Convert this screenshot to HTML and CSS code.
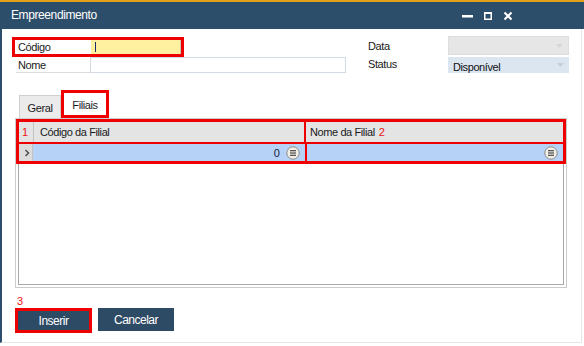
FILE: index.html
```html
<!DOCTYPE html>
<html lang="pt">
<head>
<meta charset="utf-8">
<title>Empreendimento</title>
<link rel="stylesheet" href="styles.css">
</head>
<body>
<div class="window">
  <div class="titlebar">
    <span class="title">Empreendimento</span>
    <svg class="controls" width="52" height="12" viewBox="0 0 52 12">
      <rect x="1" y="5" width="11" height="2.5" fill="#ffffff"/>
      <rect x="23.75" y="2.75" width="6.5" height="6.5" fill="none" stroke="#ffffff" stroke-width="1.5"/>
      <rect x="23" y="2" width="8" height="2" fill="#ffffff"/>
      <path d="M43.5 2.5 L50.5 9.5 M50.5 2.5 L43.5 9.5" stroke="#ffffff" stroke-width="2.2" fill="none"/>
    </svg>
  </div>
  <div class="content">
    <div class="top">
      <div class="left">
        <div class="row codigo">
          <span class="lbl">Código</span>
          <span class="field yellow"><span class="caret"></span></span>
        </div>
        <div class="row nome">
          <span class="lbl">Nome</span>
          <span class="field input"></span>
        </div>
      </div>
      <div class="right">
        <div class="row data">
          <span class="lbl">Data</span>
          <span class="field gray">
            <svg class="arrow" width="7" height="4" viewBox="0 0 7 4"><path d="M0 0 L7 0 L3.5 4 Z" fill="#d6d6d6"/></svg>
          </span>
        </div>
        <div class="row status">
          <span class="lbl">Status</span>
          <span class="field blue">
            <span class="val">Disponível</span>
            <svg class="arrow" width="7" height="4" viewBox="0 0 7 4"><path d="M0 0 L7 0 L3.5 4 Z" fill="#c2cfdc"/></svg>
          </span>
        </div>
      </div>
    </div>

    <div class="tabs">
      <span class="tab">Geral</span>
      <span class="tab active">Filiais</span>
    </div>

    <div class="gridbox">
      <div class="gridinner">
        <div class="table">
          <div class="trow head">
            <span class="rh num-red">1</span>
            <span class="cell c1">Código da Filial</span>
            <span class="cell c2">Nome da Filial <span class="num-red">2</span></span>
          </div>
          <div class="trow data">
            <span class="rh">
              <svg width="6" height="8" viewBox="0 0 6 8"><path d="M1.5 1 L4.5 4 L1.5 7" fill="none" stroke="#555" stroke-width="1.6"/></svg>
            </span>
            <span class="cell c1 right">
              <span class="zero">0</span>
              <svg class="menu" width="14" height="14" viewBox="0 0 14 14"><circle cx="7" cy="7" r="6.2" fill="#f1eee6" stroke="#8a8a8a" stroke-width="1"/><path d="M4 4.8 H10 M4 7 H10 M4 9.2 H10" stroke="#2a2a2a" stroke-width="1.1"/></svg>
            </span>
            <span class="cell c2 right">
              <svg class="menu" width="14" height="14" viewBox="0 0 14 14"><circle cx="7" cy="7" r="6.2" fill="#f1eee6" stroke="#8a8a8a" stroke-width="1"/><path d="M4 4.8 H10 M4 7 H10 M4 9.2 H10" stroke="#2a2a2a" stroke-width="1.1"/></svg>
            </span>
          </div>
        </div>
      </div>
    </div>

    <div class="footer">
      <span class="num-red step">3</span>
      <div class="buttons">
        <button class="btn hl">Inserir</button>
        <button class="btn">Cancelar</button>
      </div>
    </div>
  </div>
</div>
</body>
</html>
```

FILE: styles.css
```css
* { box-sizing: border-box; }
html, body { margin: 0; padding: 0; }
body {
  width: 584px;
  height: 346px;
  background: #ffffff;
  font-family: "Liberation Sans", Arial, sans-serif;
  font-size: 11px;
  letter-spacing: -0.4px;
  color: #1a1a1a;
  overflow: hidden;
}

.window { width: 584px; height: 346px; }

.titlebar {
  height: 29px;
  border-top: 2px solid #e5a01a;
  background: #2d4e6b;
  display: flex;
  align-items: center;
  padding-left: 11px;
}
.title {
  color: #ffffff;
  font-size: 12px;
  letter-spacing: -0.4px;
  flex: 1;
  padding-bottom: 1px;
}
.controls { margin-right: 71px; }

.content {
  width: 582px;
  height: 314px;
  border-left: 2px solid #2d4e6b;
  border-right: 1px solid #e6e6e6;
  border-bottom: 1px solid #e6e6e6;
  padding-top: 7px;
}

.top { display: flex; padding-left: 10px; }
.left { width: 334px; margin-top: 1px; }
.right { margin-left: 22px; }

.row { display: flex; align-items: stretch; }
.lbl { display: flex; align-items: center; }

.codigo {
  width: 172px;
  height: 20px;
  border: 3px solid #ee0000;
}
.codigo .lbl { width: 76px; padding-left: 3px; }
.field.yellow {
  width: 90px;
  background: #fff1a0;
  border-right: 1px solid #c9c9b0;
  position: relative;
}
.caret {
  position: absolute;
  left: 4px;
  top: 2px;
  width: 1px;
  height: 10px;
  background: #1a2a6a;
}

.nome { height: 16px; margin-left: 4px; }
.nome .lbl {
  width: 74px;
  padding-left: 2px;
  border-bottom: 1px solid #dcdcdc;
}
.field.input {
  width: 256px;
  border: 1px solid #d3dae1;
}

.right .lbl { width: 80px; }
.data { height: 19px; }
.status { height: 16px; margin-top: 2px; }
.status .lbl { padding-bottom: 2px; }
.field.gray {
  width: 121px;
  background: #e6e6e6;
  border: 1px solid #dedede;
  display: flex;
  align-items: center;
  justify-content: flex-end;
  padding-right: 5px;
}
.field.blue {
  width: 121px;
  background: #dce6f1;
  display: flex;
  align-items: center;
  justify-content: space-between;
  padding: 3px 5px 0 5px;
  color: #111;
}
.field.blue .arrow { margin-top: -3px; }

.tabs {
  display: flex;
  align-items: flex-end;
  margin-top: 17px;
  padding-left: 17px;
  height: 28px;
}
.tab {
  height: 23px;
  width: 42px;
  background: #ebebeb;
  border: 1px solid #cfcfcf;
  border-bottom: none;
  display: flex;
  align-items: center;
  justify-content: center;
  padding-top: 1px;
}
.tab.active {
  width: 48px;
  height: 28px;
  background: #ffffff;
  border: 3px solid #ee0000;
  padding-top: 2px;
}

.gridbox {
  margin-left: 13px;
  width: 552px;
  height: 170px;
  border: 1px solid #cbcbcb;
  padding: 2px;
}
.gridinner {
  height: 100%;
  border: 1px solid #a9a9a9;
}
.table {
  outline: 3px solid #ee0000;
}
.trow { display: flex; }
.trow.head { height: 22px; background: #e4e4e4; border-bottom: 2px solid #ee0000; }
.trow.data { height: 17px; background: #b6d3f7; }
.rh {
  width: 15px;
  border-right: 1px solid #c3c3c3;
  display: flex;
  align-items: center;
  padding-left: 3px;
}
.trow.data .rh { background: #dcdcdc; padding-left: 5px; }
.cell { display: flex; align-items: center; }
.c1 { width: 272px; padding-left: 6px; border-right: 2px solid #ee0000; }
.c2 { width: 254px; padding-left: 4px; }
.cell.right { justify-content: flex-end; padding-right: 5px; }
.zero { margin-right: 6px; color: #1a1a40; }
.num-red { color: #ee1111; }
.c2 .num-red { margin-left: 4px; }
.trow.head .rh { color: #ee1111; }

.footer { padding-left: 13px; padding-top: 6px; }
.step { display: block; margin-left: 2px; height: 14px; line-height: 14px; }
.buttons { display: flex; align-items: flex-start; gap: 6px; }
.btn {
  font-family: "Liberation Sans", Arial, sans-serif;
  font-size: 12px;
  letter-spacing: -0.5px;
  color: #ffffff;
  background: #2e4b66;
  border: none;
  width: 76px;
  height: 23px;
  padding: 0;
  margin: 0;
}
.btn.hl {
  width: 77px;
  height: 25px;
  border: 3px solid #ee0000;
}
```
